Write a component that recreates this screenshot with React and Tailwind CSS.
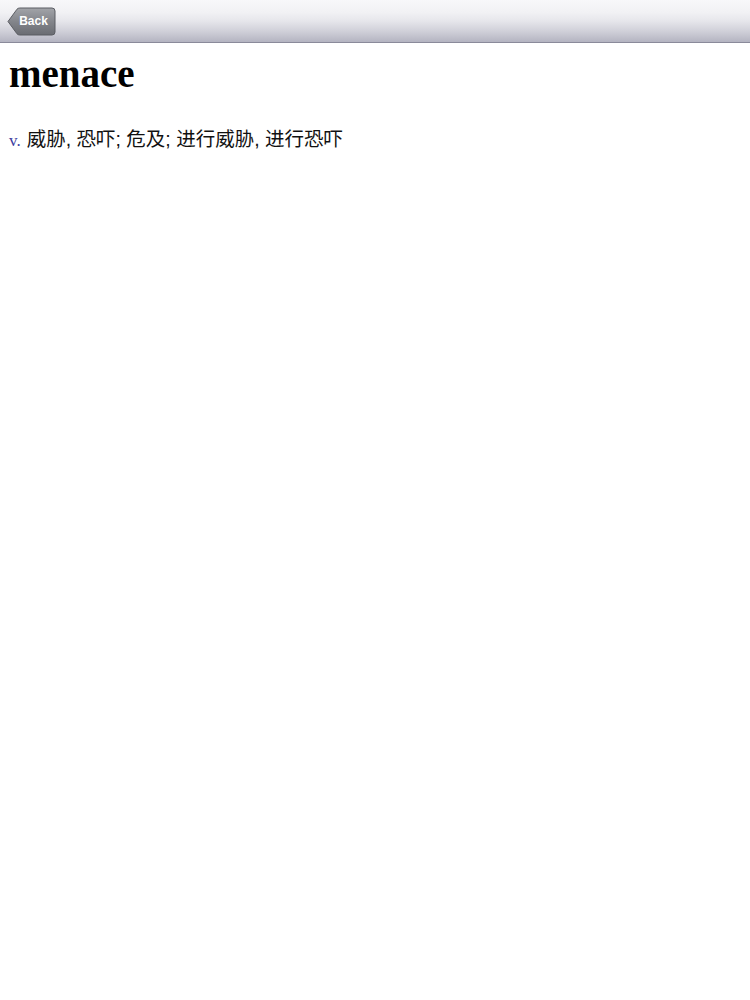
import React from "react";

const BackButton = () => {
  return (
    <button className="relative ml-[7px] h-[29px] w-[49px]">
      <svg
        className="absolute inset-0"
        width="49"
        height="29"
        viewBox="0 0 49 29"
      >
        <defs>
          <linearGradient id="backGrad" x1="0" y1="0" x2="0" y2="1">
            <stop offset="0" stopColor="#a2a4a9" />
            <stop offset="0.5" stopColor="#83858b" />
            <stop offset="1" stopColor="#6a6c72" />
          </linearGradient>
        </defs>
        <path
          d="M1 14.5 L10 2.2 Q11 1 12.8 1 L45 1 Q48 1 48 4 L48 25 Q48 28 45 28 L12.8 28 Q11 28 10 26.8 Z"
          fill="url(#backGrad)"
          stroke="#5b5d63"
          strokeWidth="1"
        />
      </svg>
      <span className="relative block pl-[4px] text-[12px] font-bold leading-[29px] text-white [font-family:'Liberation_Sans',Arial,sans-serif]">
        Back
      </span>
    </button>
  );
};

const App = () => {
  return (
    <div className="min-h-[1000px] w-[750px] bg-white">
      {/* NAV BAR */}
      <div className="flex h-[43px] items-center border-b border-[#8a8a9a] bg-[linear-gradient(180deg,#f8f8fa_0%,#f1f1f4_30%,#e6e6eb_50%,#cfcfd8_75%,#b4b4c1_100%)]">
        <BackButton />
      </div>

      {/* ENTRY */}
      <div className="px-[9px]">
        <h1 className="mt-[12px] text-[39px] font-bold leading-[38px] text-black [font-family:'Liberation_Serif','Times_New_Roman',serif]">
          menace
        </h1>
        <p className="mt-[36px] flex items-baseline text-[19.5px] leading-[20px] text-[#111] [font-family:'Liberation_Sans','Noto_Sans_CJK_SC',sans-serif]">
          <span className="mr-[6px] text-[17px] text-[#3b3b9e] [font-family:'Liberation_Serif',serif]">
            v.
          </span>
          <span>威胁, 恐吓; 危及; 进行威胁, 进行恐吓</span>
        </p>
      </div>
    </div>
  );
};

export default App;
